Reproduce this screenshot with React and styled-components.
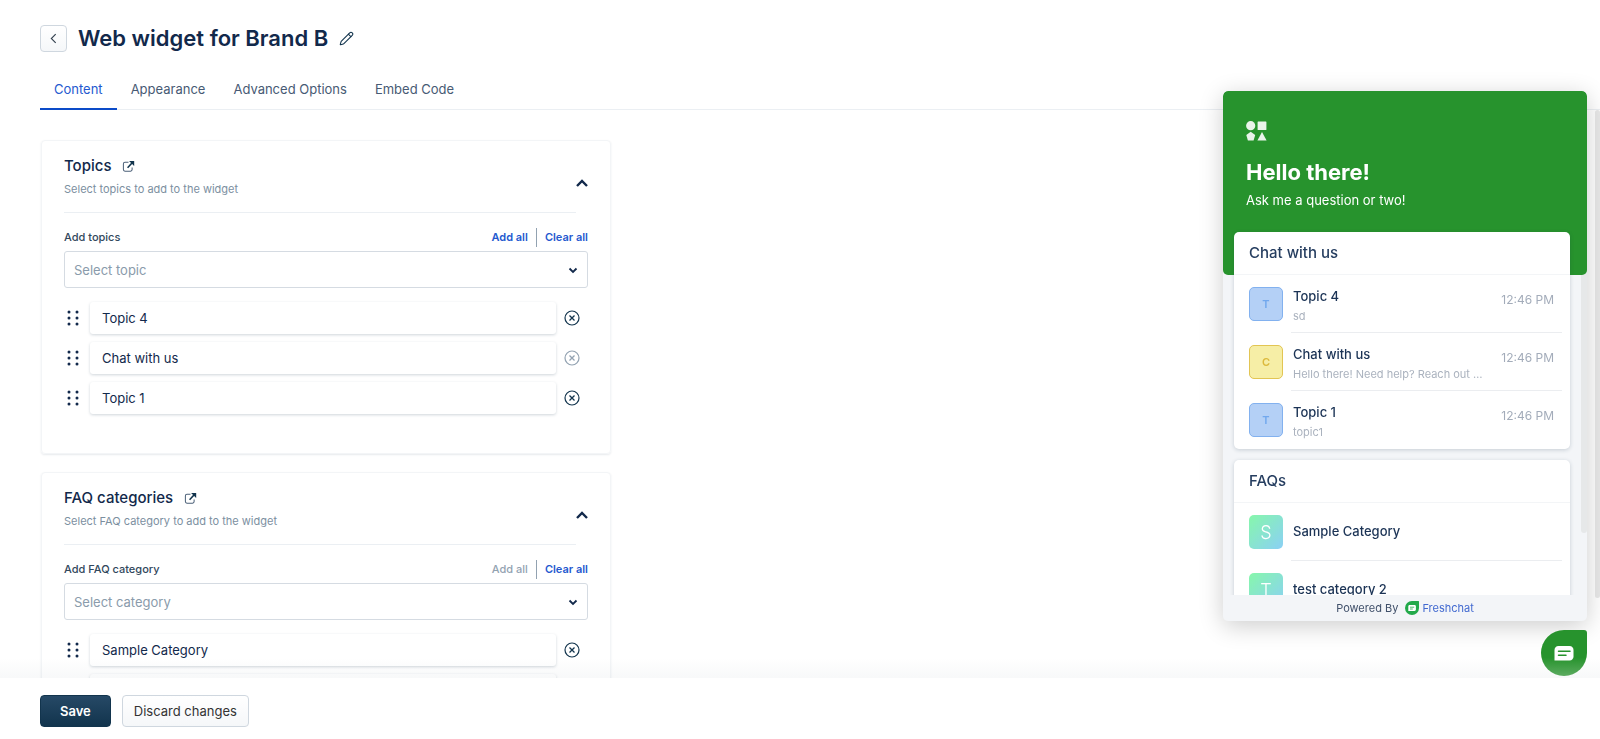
import React, { useState } from "react";
import styled, { createGlobalStyle } from "styled-components";
import { Pencil } from "lucide-react";

const tabs = ["Content", "Appearance", "Advanced Options", "Embed Code"];

const chats = [
  { name: "Topic 4", text: "sd", time: "12:46 PM", tone: "blue" },
  {
    name: "Chat with us",
    text: "Hello there! Need help? Reach out to us",
    time: "12:46 PM",
    tone: "yellow",
  },
  { name: "Topic 1", text: "topic1", time: "12:46 PM", tone: "blue" },
];

const tones = {
  blue: { bg: "#b4d0f6", line: "#82b1ef", text: "#72a8ee" },
  yellow: { bg: "#f6eea6", line: "#e2c553", text: "#dcb93c" },
};

const BackIcon = () => (
  <svg width="7" height="11" viewBox="0 0 8 12" fill="none" stroke="#33414f" strokeWidth="1.3">
    <path d="M6.5 1 1.5 6l5 5" />
  </svg>
);

const ExternalIcon = () => (
  <svg width="13" height="13" viewBox="0 0 14 14" fill="none">
    <path
      d="M7 2.5H3.2c-1 0-1.7.7-1.7 1.7v6.1c0 1 .7 1.7 1.7 1.7h6c1 0 1.7-.7 1.7-1.7V8"
      stroke="#4b6078"
      strokeWidth="1.1"
    />
    <path d="M6 8.3 11 3" stroke="#12344d" strokeWidth="1.7" />
    <path d="M7.600 1h5.500v5.500z" fill="#12344d" />
  </svg>
);

const CollapseIcon = () => (
  <svg width="12" height="8" viewBox="0 0 12 8" fill="none" stroke="#12294b" strokeWidth="2.4">
    <path d="M1 7l5-5 5 5" />
  </svg>
);

const GripIcon = () => (
  <svg width="12" height="16" viewBox="0 0 12 16" fill="#12294b">
    {[2, 8, 14].map((y) => (
      <g key={y}>
        <circle cx="2" cy={y} r="1.5" />
        <circle cx="10" cy={y} r="1.5" />
      </g>
    ))}
  </svg>
);

const RemoveIcon = () => (
  <svg width="16" height="16" viewBox="0 0 16 16" fill="none" stroke="currentColor">
    <circle cx="8" cy="8" r="7" strokeWidth="1.2" />
    <path d="M5.500 5.500l5 5M10.500 5.500l-5 5" strokeWidth="1.3" />
  </svg>
);

const ShapesLogo = () => (
  <svg width="21" height="20" viewBox="0 0 21 20" fill="#e9f4ea">
    <circle cx="4.7" cy="4.7" r="4.6" />
    <rect x="11.6" y="0.4" width="8.8" height="8.6" rx="0.5" />
    <path d="M4.7 10.8 9.2 14l-1.6 5.5H1.9L.3 14z" strokeLinejoin="round" />
    <path d="M16 11l4.6 8.4h-9.2z" />
  </svg>
);

const FreshchatLogo = () => (
  <svg width="14" height="14" viewBox="0 0 14 14">
    <path d="M7 0h6.4c.4 0 .6.2.6.6V7a7 7 0 1 1-7-7z" fill="#22a94a" />
    <path d="M4.7 4.1h4.8c.8 0 1.4.6 1.4 1.4v3c0 .8-.6 1.4-1.4 1.4H3.3V5.5c0-.8.6-1.4 1.4-1.4z" fill="#fff" />
    <path d="M5 6.2h4.2M5 8h2.8" stroke="#22a94a" strokeWidth=".8" />
  </svg>
);

const MessageIcon = () => (
  <svg width="20" height="15" viewBox="0 0 20 15">
    <path d="M4.5 0h11c2.500 0 4 1.700 4 4v6.500c0 2.300-1.500 4-4 4H.5V4c0-2.300 1.500-4 4-4z" fill="#fff" />
    <path d="M4.500 5.200h11.500M4.500 9.200h7.500" stroke="#27932d" strokeWidth="1.5" strokeLinecap="round" />
  </svg>
);

const Section = ({ id, title, hint, label, placeholder, addDisabled, items }) => (
  <Card>
    <CardHead>
      <div>
        <CardTitle>
          {title}
          <PlainLink href="#" aria-label={`Open ${title}`}>
            <ExternalIcon />
          </PlainLink>
        </CardTitle>
        <Hint>{hint}</Hint>
      </div>
      <CollapseButton aria-label={`Collapse ${title}`}>
        <CollapseIcon />
      </CollapseButton>
    </CardHead>
    <LabelRow>
      <label htmlFor={id}>{label}</label>
      <Actions>
        <TextButton disabled={addDisabled}>Add all</TextButton>
        <TextButton>Clear all</TextButton>
      </Actions>
    </LabelRow>
    <SelectWrap>
      <Select id={id} defaultValue="">
        <option value="">{placeholder}</option>
        {items.map((item) => (
          <option key={item.name}>{item.name}</option>
        ))}
      </Select>
      <svg width="10" height="7" viewBox="0 0 10 7" fill="none" stroke="#12294b" strokeWidth="1.8">
        <path d="M1.500 1.500 5 5l3.500-3.500" />
      </svg>
    </SelectWrap>
    <Items>
      {items.map((item) => (
        <Item key={item.name}>
          <IconButton aria-label={`Move ${item.name}`}>
            <GripIcon />
          </IconButton>
          <ItemName>{item.name}</ItemName>
          <IconButton disabled={item.locked} aria-label={`Remove ${item.name}`}>
            <RemoveIcon />
          </IconButton>
        </Item>
      ))}
    </Items>
  </Card>
);

const Widget = () => (
  <Panel>
    <PanelScroll>
      <Hero>
        <ShapesLogo />
        <h2>Hello there!</h2>
        <p>Ask me a question or two!</p>
      </Hero>
      <PanelCards>
        <PanelCard>
          <h3>Chat with us</h3>
          {chats.map((chat) => (
            <PanelRow key={chat.name}>
              <Avatar $tone={tones[chat.tone]}>{chat.name[0]}</Avatar>
              <RowBody>
                <RowText>
                  <strong>{chat.name}</strong>
                  <span>{chat.text}</span>
                </RowText>
                <time>{chat.time}</time>
              </RowBody>
            </PanelRow>
          ))}
        </PanelCard>
        <PanelCard>
          <h3>FAQs</h3>
          {["Sample Category", "test category 2"].map((name) => (
            <PanelRow key={name}>
              <FaqAvatar>{name[0].toUpperCase()}</FaqAvatar>
              <RowBody $center>
                <strong>{name}</strong>
              </RowBody>
            </PanelRow>
          ))}
        </PanelCard>
      </PanelCards>
    </PanelScroll>
    <Powered>
      Powered By
      <a href="#">
        <FreshchatLogo />
        Freshchat
      </a>
    </Powered>
  </Panel>
);

export default function App() {
  const [active, setActive] = useState("Content");

  return (
    <>
      <GlobalStyle />
      <Page>
        <Header>
          <BackButton aria-label="Back">
            <BackIcon />
          </BackButton>
          <h1>Web widget for Brand B</h1>
          <IconButton aria-label="Rename widget">
            <Pencil size={15} strokeWidth={1.7} />
          </IconButton>
        </Header>
        <Tabs>
          {tabs.map((tab) => (
            <Tab key={tab} $active={tab === active} onClick={() => setActive(tab)}>
              {tab}
            </Tab>
          ))}
        </Tabs>
        <Main>
          <Section
            id="topic"
            title="Topics"
            hint="Select topics to add to the widget"
            label="Add topics"
            placeholder="Select topic"
            items={[{ name: "Topic 4" }, { name: "Chat with us", locked: true }, { name: "Topic 1" }]}
          />
          <Section
            id="category"
            title="FAQ categories"
            hint="Select FAQ category to add to the widget"
            label="Add FAQ category"
            placeholder="Select category"
            addDisabled
            items={[{ name: "Sample Category" }, { name: "test category 2" }]}
          />
        </Main>
        <Footer>
          <Button $primary>Save</Button>
          <Button>Discard changes</Button>
        </Footer>
      </Page>
      <Widget />
      <Launcher aria-label="Open chat">
        <MessageIcon />
      </Launcher>
    </>
  );
}

const GlobalStyle = createGlobalStyle`
  * {
    box-sizing: border-box;
  }
  body {
    margin: 0;
    background: #fff;
    color: #12344d;
    font-family: Inter, "Liberation Sans", sans-serif;
    font-size: 13px;
  }
  h1, h2, h3, p {
    margin: 0;
  }
  button, select {
    font-family: inherit;
  }
  svg {
    display: block;
  }
`;

const Page = styled.div`
  display: flex;
  flex-direction: column;
  height: 100vh;
  overflow: hidden;
`;

const Header = styled.header`
  display: flex;
  align-items: center;
  gap: 11px;
  padding: 24px 40px 0;
  h1 {
    font-size: 22px;
    line-height: 28px;
    font-weight: 600;
    color: #12294b;
  }
`;

const IconButton = styled.button`
  display: flex;
  align-items: center;
  justify-content: center;
  padding: 0;
  border: 0;
  background: none;
  color: #12344d;
  &:disabled {
    color: #92a2b1;
  }
`;

const BackButton = styled(IconButton)`
  width: 27px;
  height: 27px;
  border: 1px solid #cfd7df;
  border-radius: 4px;
  background: linear-gradient(#fff, #f5f7f9);
`;

const CollapseButton = styled(IconButton)`
  padding-bottom: 4px;
`;

const Tabs = styled.nav`
  display: flex;
  flex: none;
  margin: 16px 0 0 40px;
  border-bottom: 1px solid #ebeff3;
`;

const Tab = styled.button`
  height: 42px;
  margin-bottom: -1px;
  padding: 2px 14px 0;
  border: 0;
  border-bottom: 2px solid ${({ $active }) => ($active ? "#0c4bc8" : "transparent")};
  background: none;
  font-size: 13px;
  color: ${({ $active }) => ($active ? "#2459cf" : "#475a74")};
`;

const Main = styled.main`
  position: relative;
  display: flex;
  flex: 1;
  flex-direction: column;
  gap: 18px;
  min-height: 0;
  padding: 30px 41px 0;
  overflow: hidden;
  &::after {
    content: "";
    position: absolute;
    top: 0;
    right: 0;
    width: 5px;
    height: 86%;
    border-radius: 3px;
    background: #e8e8e8;
  }
`;

const Card = styled.section`
  flex: none;
  width: 100%;
  max-width: 570px;
  padding: 16px 22px 39px;
  border: 1px solid #f3f5f7;
  border-radius: 4px;
  box-shadow: 0 1px 2px rgba(18, 52, 77, 0.1);
`;

const CardHead = styled.div`
  display: flex;
  justify-content: space-between;
  align-items: center;
  > div {
    flex: 1;
    padding-bottom: 16px;
    border-bottom: 1px solid #ebeff3;
  }
`;

const CardTitle = styled.h3`
  display: flex;
  align-items: center;
  gap: 11px;
  font-size: 15px;
  line-height: 18px;
  font-weight: 500;
  color: #12294b;
`;

const PlainLink = styled.a`
  color: inherit;
`;

const Hint = styled.p`
  margin-top: 7px;
  font-size: 11px;
  line-height: 14px;
  color: #7c8f9f;
`;

const LabelRow = styled.div`
  display: flex;
  align-items: center;
  justify-content: space-between;
  margin: 15px 0 4px;
  font-size: 11px;
  line-height: 19px;
  font-weight: 500;
  color: #31475c;
`;

const Actions = styled.div`
  display: flex;
  gap: 8px;
  button + button {
    padding-left: 8px;
    border-left: 1px solid #92a2b1;
  }
`;

const TextButton = styled.button`
  padding: 0;
  border: 0;
  background: none;
  font-size: 11px;
  line-height: 19px;
  font-weight: 600;
  color: #2459cf;
  &:disabled {
    font-weight: 500;
    color: #92a2b1;
  }
`;

const SelectWrap = styled.div`
  position: relative;
  svg {
    position: absolute;
    top: 16px;
    right: 10px;
    pointer-events: none;
  }
`;

const Select = styled.select`
  display: block;
  width: 100%;
  height: 37px;
  padding: 0 9px;
  border: 1px solid #d5dbe2;
  border-radius: 3px;
  background: #fff;
  appearance: none;
  font-size: 13px;
  color: #8a9bab;
`;

const Items = styled.div`
  display: grid;
  gap: 8px;
  margin-top: 14px;
`;

const Item = styled.div`
  display: flex;
  align-items: center;
  gap: 8px;
  padding: 0 8px 0 3px;
`;

const ItemName = styled.div`
  flex: 1;
  margin-left: 3px;
  padding: 0 12px;
  border-radius: 3px;
  box-shadow: 0 1px 3px rgba(18, 52, 77, 0.2);
  font-size: 13px;
  line-height: 32px;
  color: #12294b;
`;

const Footer = styled.footer`
  position: relative;
  display: flex;
  gap: 11px;
  padding: 17px 40px 12px;
  background: #fff;
  &::before {
    content: "";
    position: absolute;
    right: 0;
    bottom: 100%;
    left: 0;
    height: 20px;
    background: linear-gradient(rgba(18, 52, 77, 0), rgba(18, 52, 77, 0.03));
  }
`;

const Button = styled.button`
  height: 32px;
  padding: 0 ${({ $primary }) => ($primary ? 19 : 11)}px;
  border: 1px solid ${({ $primary }) => ($primary ? "#12344d" : "#cfd7df")};
  border-radius: 4px;
  background: ${({ $primary }) =>
    $primary ? "linear-gradient(#264966, #12344d)" : "linear-gradient(#fff, #f5f7f9)"};
  font-size: 13px;
  font-weight: ${({ $primary }) => ($primary ? 600 : 400)};
  color: ${({ $primary }) => ($primary ? "#fff" : "#333")};
`;

const Panel = styled.aside`
  position: fixed;
  top: 91px;
  right: 13px;
  bottom: 118px;
  display: flex;
  flex-direction: column;
  width: 364px;
  border-radius: 5px;
  background: #f3f5f8;
  box-shadow: 0 5px 24px rgba(0, 0, 0, 0.2);
  overflow: hidden;
`;

const PanelScroll = styled.div`
  position: relative;
  flex: 1;
  min-height: 0;
  overflow: hidden;
  &::after {
    content: "";
    position: absolute;
    z-index: -1;
    top: 0;
    right: 0;
    width: 6px;
    height: 442px;
    border-radius: 3px;
    background: #e6e8e9;
  }
`;

const Hero = styled.div`
  padding: 30px 23px 67px;
  border-radius: 5px;
  background: #27932d;
  color: #fff;
  h2 {
    margin-top: 17px;
    font-size: 22px;
    line-height: 28px;
    font-weight: 700;
  }
  p {
    margin-top: 6px;
    font-size: 13px;
    line-height: 16px;
  }
`;

const PanelCards = styled.div`
  display: grid;
  gap: 11px;
  margin-top: -43px;
  padding: 0 17px 0 11px;
`;

const PanelCard = styled.section`
  min-width: 0;
  border-radius: 5px;
  background: #fff;
  box-shadow: 0 1px 4px rgba(18, 52, 77, 0.2);
  h3 {
    padding: 0 15px;
    border-bottom: 1px solid #f3f5f7;
    font-size: 15px;
    line-height: 42px;
    font-weight: 500;
    color: #263e60;
  }
`;

const PanelRow = styled.div`
  display: flex;
  gap: 8px;
  height: 58px;
  padding: 0 8px 0 15px;
  &:last-child > div:last-child {
    border-color: transparent;
  }
`;

const Avatar = styled.div`
  display: flex;
  align-items: center;
  justify-content: center;
  width: 34px;
  height: 34px;
  margin-top: 12px;
  border: 1px solid ${({ $tone }) => $tone.line};
  border-radius: 5px;
  background: ${({ $tone }) => $tone.bg};
  font-size: 11px;
  font-weight: 600;
  color: ${({ $tone }) => $tone.text};
`;

const FaqAvatar = styled(Avatar).attrs({ $tone: {} })`
  border: 0;
  background: linear-gradient(135deg, #86f7ab, #8bd0f5);
  font-size: 18px;
  font-weight: 300;
  color: #fff;
`;

const RowBody = styled.div`
  display: flex;
  flex: 1;
  justify-content: space-between;
  align-items: ${({ $center }) => ($center ? "center" : "flex-start")};
  gap: 16px;
  min-width: 0;
  padding: ${({ $center }) => ($center ? "0 8px 0 2px" : "12px 8px 0 2px")};
  border-bottom: 1px solid #ebedf0;
  strong {
    font-size: 13px;
    line-height: 19px;
    font-weight: 500;
    color: #1b3355;
  }
  time {
    flex: none;
    font-size: 12px;
    line-height: 26px;
    color: #a3acba;
  }
`;

const RowText = styled.div`
  display: grid;
  gap: 2px;
  min-width: 0;
  span {
    overflow: hidden;
    font-size: 11px;
    line-height: 16px;
    white-space: nowrap;
    text-overflow: ellipsis;
    color: #aab2be;
  }
`;

const Powered = styled.div`
  display: flex;
  align-items: center;
  justify-content: center;
  gap: 7px;
  height: 26px;
  font-size: 11px;
  color: #40506a;
  a {
    display: flex;
    align-items: center;
    gap: 3px;
    color: #4169d0;
    text-decoration: none;
  }
`;

const Launcher = styled.button`
  position: fixed;
  right: 13px;
  bottom: 63px;
  display: flex;
  align-items: center;
  justify-content: center;
  width: 46px;
  height: 46px;
  padding: 0;
  border: 0;
  border-radius: 50% 3px 50% 50%;
  background: linear-gradient(#27932d 60%, #5cab60);
`;
